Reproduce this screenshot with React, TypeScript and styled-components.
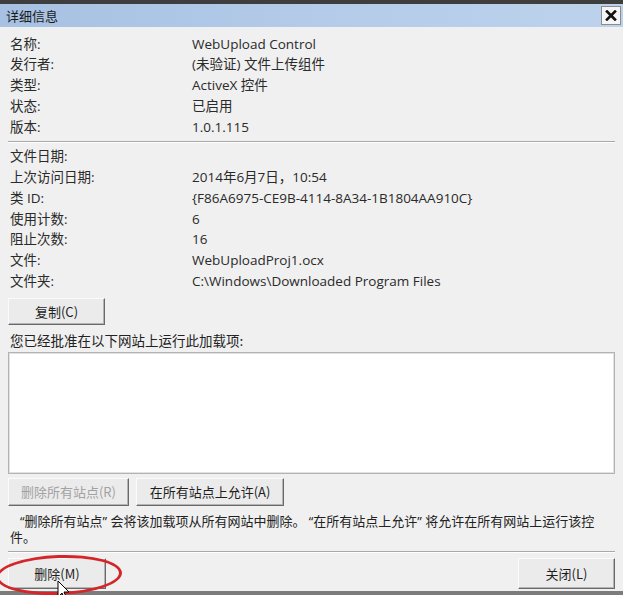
import styled, { createGlobalStyle } from "styled-components";

const GlobalStyle = createGlobalStyle`
  html, body {
    margin: 0;
    padding: 0;
    background: #f0f0f0;
  }
  body {
    font-family: "Open Sans", "Noto Sans CJK SC", sans-serif;
    font-size: 13.5px;
    color: #222;
  }
`;

type Row = { label: string; value?: string };

const general: Row[] = [
  { label: "名称:", value: "WebUpload Control" },
  { label: "发行者:", value: "(未验证) 文件上传组件" },
  { label: "类型:", value: "ActiveX 控件" },
  { label: "状态:", value: "已启用" },
  { label: "版本:", value: "1.0.1.115" },
];

const fileInfo: Row[] = [
  { label: "文件日期:" },
  { label: "上次访问日期:", value: "2014年6月7日，10:54" },
  { label: "类 ID:", value: "{F86A6975-CE9B-4114-8A34-1B1804AA910C}" },
  { label: "使用计数:", value: "6" },
  { label: "阻止次数:", value: "16" },
  { label: "文件:", value: "WebUploadProj1.ocx" },
  { label: "文件夹:", value: "C:\\Windows\\Downloaded Program Files" },
];

// 창 전체
const Window = styled.div`
  position: relative;
  width: 623px;
  height: 595px;
  box-sizing: border-box;
  border-top: 4px solid #3e3e3e;
  background: #f0f0f0;
  display: flex;
  flex-direction: column;
  overflow: hidden;
`;

const TitleBar = styled.div`
  height: 23px;
  flex-shrink: 0;
  display: flex;
  align-items: center;
  justify-content: space-between;
  padding: 0 2px 0 6px;
  background: linear-gradient(to right, #a7c1e2, #b6cdea 60%, #bcd2ec);
`;

const TitleText = styled.span`
  font-size: 13px;
  color: #1b1b1b;
  font-family: "Noto Sans CJK SC", sans-serif;
`;

const CloseX = styled.div`
  width: 20px;
  height: 19px;
  box-sizing: border-box;
  border: 1px solid #8c8c8c;
  background: #f5f5f5;
  display: flex;
  align-items: center;
  justify-content: center;
`;

const Content = styled.div`
  flex: 1;
  display: flex;
  flex-direction: column;
  padding: 6.5px 8px 0 8px;
`;

const InfoGrid = styled.div`
  display: grid;
  grid-template-columns: 182px 1fr;
  padding-left: 2px;
  line-height: 20.75px;
  white-space: nowrap;
`;

const Cell = styled.div`
  color: #2a2a2a;
`;

const Separator = styled.div<{ $top: number; $bottom: number }>`
  height: 1px;
  background: #a9a9a9;
  border-bottom: 1px solid #ffffff;
  margin: ${(p) => p.$top}px 0 ${(p) => p.$bottom}px 0;
`;

const Button = styled.button<{ $width: number; $height?: number; $disabled?: boolean }>`
  width: ${(p) => p.$width}px;
  height: ${(p) => p.$height ?? 28}px;
  box-sizing: border-box;
  padding: 0;
  font-family: "Noto Sans CJK SC", "Open Sans", sans-serif;
  font-size: 13px;
  color: ${(p) => (p.$disabled ? "#a2a2a2" : "#1e1e1e")};
  background: #ebebeb;
  border: 1px solid;
  border-color: #fbfbfb #6a6a6a #6a6a6a #fbfbfb;
  box-shadow: inset -1px -1px 0 #b4b4b4;
  cursor: default;
`;

const CopyRow = styled.div`
  margin-top: 6px;
`;

const ApproveText = styled.div`
  margin-top: 5px;
  line-height: 20px;
  padding-left: 2px;
  font-family: "Noto Sans CJK SC", sans-serif;
  font-size: 13.5px;
`;

const SiteList = styled.div`
  margin-top: 2px;
  height: 122px;
  box-sizing: border-box;
  background: #ffffff;
  border: 1px solid #b3b3b3;
  box-shadow: inset 1px 1px 0 #e2e2e2, inset -1px -1px 0 #e2e2e2;
`;

const ButtonRow = styled.div`
  margin-top: 4px;
  display: flex;
  gap: 7px;
`;

const Note = styled.div`
  margin-top: 7px;
  line-height: 16px;
  padding-left: 2px;
  text-indent: 10px;
  font-size: 13px;
  font-family: "Open Sans", "Noto Sans CJK SC", sans-serif;
`;

const Footer = styled.div`
  display: flex;
  justify-content: space-between;
  align-items: flex-start;
  flex: 1;
`;

const BottomEdge = styled.div`
  height: 4px;
  flex-shrink: 0;
  background: #7c7c7c;
`;

// 빨간 표시 원
const RedMark = styled.div`
  position: absolute;
  left: -4px;
  top: 551px;
  width: 126px;
  height: 40px;
  box-sizing: border-box;
  border: 3px solid #d4262a;
  border-radius: 50%;
  transform: rotate(-2deg);
  pointer-events: none;
`;

const Cursor = styled.svg`
  position: absolute;
  left: 57px;
  top: 576px;
`;

function App() {
  return (
    <>
      <GlobalStyle />
      <Window>
        <TitleBar>
          <TitleText>详细信息</TitleText>
          <CloseX>
            <svg width="12" height="11" viewBox="0 0 12 11">
              <path d="M2 1.5 L10 9.5 M10 1.5 L2 9.5" stroke="#111" strokeWidth="2.6" strokeLinecap="square" />
            </svg>
          </CloseX>
        </TitleBar>
        <Content>
          <InfoGrid>
            {general.map((r) => [
              <Cell key={r.label}>{r.label}</Cell>,
              <Cell key={r.label + "v"}>{r.value ?? ""}</Cell>,
            ])}
          </InfoGrid>
          <Separator $top={4} $bottom={3} />
          <InfoGrid>
            {fileInfo.map((r) => [
              <Cell key={r.label}>{r.label}</Cell>,
              <Cell key={r.label + "v"}>{r.value ?? ""}</Cell>,
            ])}
          </InfoGrid>
          <CopyRow>
            <Button $width={97} $height={27}>复制(C)</Button>
          </CopyRow>
          <ApproveText>您已经批准在以下网站上运行此加载项:</ApproveText>
          <SiteList />
          <ButtonRow>
            <Button $width={121} $disabled>删除所有站点(R)</Button>
            <Button $width={148}>在所有站点上允许(A)</Button>
          </ButtonRow>
          <Note>
            “删除所有站点” 会将该加载项从所有网站中删除。 “在所有站点上允许” 将允许在所有网站上运行该控件。
          </Note>
          <Separator $top={6} $bottom={5} />
          <Footer>
            <Button $width={98} $height={31}>删除(M)</Button>
            <Button $width={97} $height={31}>关闭(L)</Button>
          </Footer>
        </Content>
        <BottomEdge />
        <RedMark />
        <Cursor width="14" height="22" viewBox="0 0 14 22">
          <path d="M1 1 L1 17 L5 13 L8 20 L10 19 L7 12 L12 12 Z" fill="#fff" stroke="#000" strokeWidth="1" />
        </Cursor>
      </Window>
    </>
  );
}

export default App;
